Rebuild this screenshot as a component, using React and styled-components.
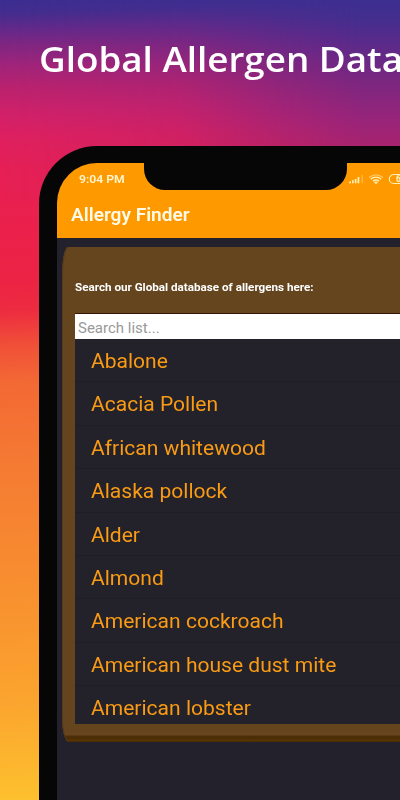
import React from "react";
import styled, { createGlobalStyle } from "styled-components";

const GlobalStyle = createGlobalStyle`
  * { box-sizing: border-box; }
  html, body { margin: 0; padding: 0; overflow: hidden; }
`;

const Poster = styled.main`
  position: relative;
  isolation: isolate;
  width: 400px;
  height: 800px;
  overflow: hidden;
  display: flex;
  flex-direction: column;
  font-family: Roboto, "Liberation Sans", sans-serif;
  background: linear-gradient(178deg, #3b2e90 0, #442d8e 14px, #65298a 30px, #852680 48px, #a2247a 66px, #bb226e 88px, #d0216a 112px, #df205f 138px, #e62056 170px, #ea204e 210px, #ec2344 280px, #ed2b40 310px, #f05038 346px, #f36934 383px, #f57c32 475px, #f8912f 600px, #fba42e 700px, #fdc22e 806px);

  &::before {
    content: "";
    position: absolute;
    z-index: -1;
    inset: 0 0 auto 0;
    height: 200px;
    background: linear-gradient(180deg, #3d2f90 0, #432e8e 18px, #572a8b 40px, #6e2884 65px, #83267e 92px, #98247a 120px, #a9236d 148px);
    mask-image: linear-gradient(90deg, transparent 0, rgba(0, 0, 0, 0.26) 45%, rgba(0, 0, 0, 0.72) 70%, #000 90%);
  }
`;

const Stretched = styled.span`
  display: inline-block;
  transform: scaleX(${(p) => p.$by});
  transform-origin: left center;
  white-space: nowrap;
`;

const Headline = styled.h1`
  margin: 0;
  height: 146px;
  flex: none;
  padding: 36px 0 0 38.5px;
  font: 600 34.5px/46px "Open Sans", sans-serif;
  color: #fff;
  white-space: nowrap;
`;

const Phone = styled.section`
  position: relative;
  width: 460px;
  flex: none;
  height: 654px;
  margin-left: 39px;
  padding: 17px 0 0 18px;
  background: #060606;
  border-radius: 58px 0 0 0;
`;

const Screen = styled.div`
  display: flex;
  flex-direction: column;
  height: 100%;
  background: #23212b;
  border-radius: 40px 0 0 0;
  overflow: hidden;
`;

const Header = styled.header`
  height: 75px;
  flex: none;
  background: #ff9900;
  color: #fffbe8;
`;

const StatusBar = styled.div`
  display: flex;
  align-items: center;
  height: 32px;
  padding-left: 21.5px;
`;

const Clock = styled.span`
  width: 270px;
  font-size: 11.5px;
  font-weight: 600;
  color: #fff6cf;
`;

const StatusIcons = styled.svg`
  display: block;
  flex: none;
`;

const Notch = styled.div`
  position: absolute;
  left: 105px;
  top: 16px;
  width: 203px;
  height: 27.5px;
  background: #060606;
  border-radius: 0 0 21px 21px;
`;

const AppTitle = styled.h2`
  margin: 0;
  padding: 9px 0 0 14px;
  font-size: 17.5px;
  font-weight: 600;
  line-height: 22px;
`;

const Board = styled.div`
  flex: none;
  height: 495px;
  margin: 9px 0 0 5px;
  padding: 34px 0 0 13px;
  border-radius: 6px 0 0 7px / 28px 0 0 24px;
  box-shadow: inset 1px 0 #543a1d;
  background: linear-gradient(#64451e 0, #64451e 484px, #68461d 488px, #4b2e08 489px, #4c2c03 492px, #5a3802 493px, #452904 495px);
`;

const Prompt = styled.p`
  margin: 0;
  height: 33px;
  font-size: 11px;
  font-weight: 700;
  line-height: 14px;
  color: #fff;
`;

const SearchField = styled.input`
  display: block;
  width: 100%;
  height: 25px;
  padding: 2px 3px 0;
  border: 0;
  border-radius: 0;
  outline: 0;
  background: #fff;
  box-shadow: 0 -1px #3a1307;
  font: 400 15px/22px Roboto, sans-serif;

  &::placeholder {
    color: #999;
    opacity: 1;
  }
`;

const AllergenList = styled.ul`
  display: flex;
  flex-direction: column;
  height: 385px;
  margin: 0;
  padding: 0;
  overflow: hidden;
  list-style: none;
  background: #23212a;
`;

const Allergen = styled.li`
  flex: none;
  height: 43.4px;
  padding-left: 15.5px;
  border-bottom: 1px solid #1f1d26;
  font-size: 20px;
  line-height: 44px;
  color: #f99b14;
`;

const allergens = [
  "Abalone",
  "Acacia Pollen",
  "African whitewood",
  "Alaska pollock",
  "Alder",
  "Almond",
  "American cockroach",
  "American house dust mite",
  "American lobster",
];

export default function App() {
  return (
    <Poster>
      <GlobalStyle />
      <Headline>
        <Stretched $by={1.066}>Global Allergen Data</Stretched>
      </Headline>
      <Phone>
        <Screen>
          <Header>
            <StatusBar>
              <Clock>
                <Stretched $by={1.06}>9:04 PM</Stretched>
              </Clock>
              <StatusIcons width="70" height="12" viewBox="0 0 70 12">
                <g fill="#fff2b8">
                  <path d="M0 10.2V9l2-.8v2zM3 7.2h1.7v3H3zM5.8 6h1.7v4.2H5.8zM8.6 4.1h1.7v6.1H8.6z" />
                  <path d="M12.5 1.8H14v8.4h-1.5z" opacity=".35" />
                </g>
                <g fill="none" stroke="#fff2b8" strokeWidth="1.4">
                  <path d="M20 4.6Q27-.8 34 4.6" opacity=".5" />
                  <path d="M21.8 6.2Q27 2 32.2 6.2M24 8.2Q27 5.8 30 8.2" />
                  <rect x="40.3" y="1.5" width="24" height="9" rx="4.5" strokeWidth="1.1" />
                </g>
                <path d="M25 9.2Q27 7.8 29 9.2L27 11.3z" fill="#fff2b8" />
                <text x="47" y="9.3" fontFamily="Roboto, sans-serif" fontSize="8.5" fontWeight="700" fill="#fff2b8">6</text>
              </StatusIcons>
            </StatusBar>
            <AppTitle>
              <Stretched $by={1.09}>Allergy Finder</Stretched>
            </AppTitle>
          </Header>
          <Board>
            <Prompt>
              <Stretched $by={1.06}>Search our Global database of allergens here:</Stretched>
            </Prompt>
            <SearchField placeholder="Search list..." aria-label="Search list" />
            <AllergenList>
              {allergens.map((name) => (
                <Allergen key={name}>
                  <Stretched $by={1.052}>{name}</Stretched>
                </Allergen>
              ))}
            </AllergenList>
          </Board>
        </Screen>
        <Notch />
      </Phone>
    </Poster>
  );
}
